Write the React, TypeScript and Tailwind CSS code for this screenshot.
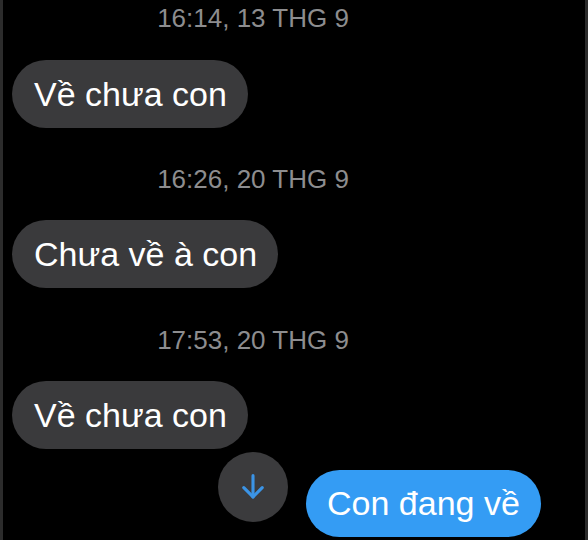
import React from "react";

const font = { fontFamily: '"Liberation Sans", Arial, sans-serif' };

function Stamp({ text, className }: { text: string; className: string }) {
  return (
    <div className={`w-[500px] text-center text-[26px] leading-[30px] text-[#8d8d8f] ${className}`}>
      {text}
    </div>
  );
}

function Incoming({ text, className }: { text: string; className: string }) {
  return (
    <div className={`flex ${className}`}>
      <div className="h-[68px] flex items-center rounded-full bg-[#3a3a3c] pl-[22px] pr-[21px] text-[34px] text-white whitespace-nowrap">
        {text}
      </div>
    </div>
  );
}

export default function App() {
  return (
    <div
      className="w-[588px] h-[540px] overflow-hidden bg-black border-l-[3px] border-r-[3px] border-[#2c2c2c] pl-[9px] pt-[3px]"
      style={font}
    >
      <Stamp text="16:14, 13 THG 9" className="-ml-[9px]" />
      <Incoming text="Về chưa con" className="mt-[27px]" />

      <Stamp text="16:26, 20 THG 9" className="-ml-[9px] mt-[36px]" />
      <Incoming text="Chưa về à con" className="mt-[26px]" />

      <Stamp text="17:53, 20 THG 9" className="-ml-[9px] mt-[37px]" />
      <Incoming text="Về chưa con" className="mt-[26px]" />

      <div className="mt-[3px] flex items-start pl-[206px]">
        <div className="w-[70px] h-[70px] shrink-0 rounded-full bg-[#3b3b3d] flex items-center justify-center">
          <svg width="34" height="34" viewBox="0 0 24 24" fill="none" stroke="#3b94e6" strokeWidth="2.2" strokeLinecap="round" strokeLinejoin="round">
            <path d="M12 4v15" />
            <path d="M18.5 12.5l-6.5 6.5-6.5-6.5" />
          </svg>
        </div>
        <div className="ml-[18px] mt-[18px] h-[67px] flex items-center rounded-full bg-[#349cf4] pl-[21px] pr-[21px] text-[34px] text-white whitespace-nowrap">
          Con đang về
        </div>
      </div>
    </div>
  );
}
